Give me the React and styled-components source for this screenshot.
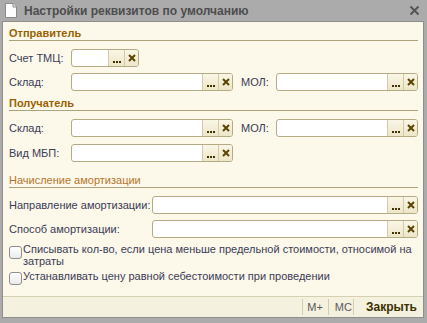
import React from 'react';
import styled, { createGlobalStyle } from 'styled-components';

const Global = createGlobalStyle`
  html, body { margin: 0; padding: 0; }
  body { font-family: "Liberation Sans", Arial, sans-serif; font-size: 11px; }
`;

const Window = styled.div`
  width: 427px;
  height: 323px;
  box-sizing: border-box;
  background: #ababab;
  padding: 0 3px 5px 2px;
  display: flex;
  flex-direction: column;
`;

const TitleBar = styled.div`
  height: 21px;
  flex: none;
  display: flex;
  align-items: center;
  padding: 0 4px 0 3px;
`;

const TitleText = styled.div`
  flex: 1;
  margin-left: 7px;
  font-weight: bold;
  font-size: 12px;
  color: #4d4d4d;
  white-space: nowrap;
`;

const Body = styled.div`
  flex: 1;
  display: flex;
  flex-direction: column;
  background: #fcf9ea;
  border: 1px solid #8e8e8e;
`;

const Content = styled.div`
  padding: 0 5px 0 6px;
  display: flex;
  flex-direction: column;
`;

const SectionTitle = styled.div`
  margin-top: ${p => p.$mt}px;
  height: 14px;
  line-height: 14px;
  border-bottom: 1px solid #aca37d;
  color: ${p => (p.$sub ? '#b8752a' : '#9a5f00')};
  font-weight: ${p => (p.$sub ? 'normal' : 'bold')};
  white-space: nowrap;
`;

const Row = styled.div`
  display: flex;
  align-items: flex-start;
  height: 18px;
  margin-top: ${p => p.$mt}px;
`;

const Label = styled.div`
  flex: none;
  width: ${p => p.$w}px;
  margin-left: ${p => p.$ml || 0}px;
  padding-top: 2px;
  line-height: 14px;
  color: #3b3b57;
  white-space: nowrap;
`;

const Field = styled.div`
  display: flex;
  height: 18px;
  box-sizing: border-box;
  border: 1px solid #b4ab84;
  border-radius: 3px;
  background: #fff;
  overflow: hidden;
  width: ${p => (p.$w ? `${p.$w}px` : 'auto')};
  flex: ${p => (p.$w ? 'none' : '1')};
`;

const FieldInput = styled.div`
  flex: 1;
`;

const FieldButton = styled.div`
  flex: none;
  width: ${p => p.$w}px;
  box-sizing: border-box;
  border-left: 1px solid #d2caa8;
  background: linear-gradient(#faf6e6, #ede6c8);
  display: flex;
  align-items: ${p => (p.$bottom ? 'flex-end' : 'center')};
  justify-content: center;
  padding-bottom: ${p => (p.$bottom ? '3px' : '0')};
`;

const Dot = styled.span`
  width: 2px;
  height: 2px;
  margin: 0 0.5px;
  background: #3f3400;
`;

const CheckRow = styled.div`
  display: flex;
  align-items: flex-start;
  margin-top: ${p => p.$mt}px;
  line-height: 12px;
  color: #3b3b57;
`;

const Box = styled.span`
  flex: none;
  width: 13px;
  height: 13px;
  box-sizing: border-box;
  margin-top: ${p => p.$mt}px;
  margin-right: 1px;
  border: 1px solid #8e8e8e;
  border-radius: 3px;
  background: linear-gradient(#ffffff, #ebebeb);
`;

const Footer = styled.div`
  margin-top: auto;
  height: 20px;
  border-top: 1px solid #d6d0b3;
  background: #f5f1df;
  display: flex;
  justify-content: flex-end;
  align-items: center;
`;

const FooterButton = styled.div`
  height: 16px;
  line-height: 16px;
  border-left: 1px solid #d3cdb0;
  padding: 0 ${p => p.$pr}px 0 ${p => p.$pl}px;
  color: ${p => (p.$main ? '#3a3000' : '#5a5a5a')};
  font-weight: ${p => (p.$main ? 'bold' : 'normal')};
  font-size: ${p => (p.$main ? 12 : 11)}px;
  white-space: nowrap;
`;

const DocIcon = () => (
  <svg width="12" height="15" viewBox="0 0 12 15">
    <path d="M0.5 0.5 H8 L11.5 4 V14.5 H0.5 Z" fill="#fdfdfd" stroke="#8a8a8a" />
    <path d="M8 0.5 V4 H11.5" fill="#e6e6e6" stroke="#8a8a8a" />
  </svg>
);

const CloseIcon = () => (
  <svg width="11" height="11" viewBox="0 0 11 11">
    <path d="M1.5 1.5 L9.5 9.5 M9.5 1.5 L1.5 9.5" stroke="#555555" strokeWidth="2" />
  </svg>
);

const XIcon = () => (
  <svg width="8" height="8" viewBox="0 0 8 8">
    <path d="M1 1 L7 7 M7 1 L1 7" stroke="#5a4500" strokeWidth="2" />
  </svg>
);

const Input = ({ w }) => (
  <Field $w={w}>
    <FieldInput />
    <FieldButton $w={16} $bottom>
      <Dot />
      <Dot />
      <Dot />
    </FieldButton>
    <FieldButton $w={14}>
      <XIcon />
    </FieldButton>
  </Field>
);

export default function App() {
  return (
    <>
      <Global />
      <Window>
        <TitleBar>
          <DocIcon />
          <TitleText>Настройки реквизитов по умолчанию</TitleText>
          <CloseIcon />
        </TitleBar>
        <Body>
          <Content>
            <SectionTitle $mt={4}>Отправитель</SectionTitle>
            <Row $mt={8}>
              <Label $w={62}>Счет ТМЦ:</Label>
              <Input w={68} />
            </Row>
            <Row $mt={6}>
              <Label $w={62}>Склад:</Label>
              <Input w={162} />
              <Label $w={35} $ml={8}>МОЛ:</Label>
              <Input />
            </Row>
            <SectionTitle $mt={5}>Получатель</SectionTitle>
            <Row $mt={8}>
              <Label $w={62}>Склад:</Label>
              <Input w={162} />
              <Label $w={35} $ml={8}>МОЛ:</Label>
              <Input />
            </Row>
            <Row $mt={7}>
              <Label $w={62}>Вид МБП:</Label>
              <Input w={162} />
            </Row>
            <SectionTitle $mt={11} $sub>Начисление амортизации</SectionTitle>
            <Row $mt={8}>
              <Label $w={143}>Направление амортизации:</Label>
              <Input />
            </Row>
            <Row $mt={6}>
              <Label $w={143}>Способ амортизации:</Label>
              <Input />
            </Row>
            <CheckRow $mt={5}>
              <Box $mt={3} />
              <span>Списывать кол-во, если цена меньше предельной стоимости, относимой на затраты</span>
            </CheckRow>
            <CheckRow $mt={3}>
              <Box $mt={2} />
              <span>Устанавливать цену равной себестоимости при проведении</span>
            </CheckRow>
          </Content>
          <Footer>
            <FooterButton $pl={4} $pr={5}>M+</FooterButton>
            <FooterButton $pl={6} $pr={1}>MC</FooterButton>
            <FooterButton $pl={12} $pr={6} $main>Закрыть</FooterButton>
          </Footer>
        </Body>
      </Window>
    </>
  );
}
